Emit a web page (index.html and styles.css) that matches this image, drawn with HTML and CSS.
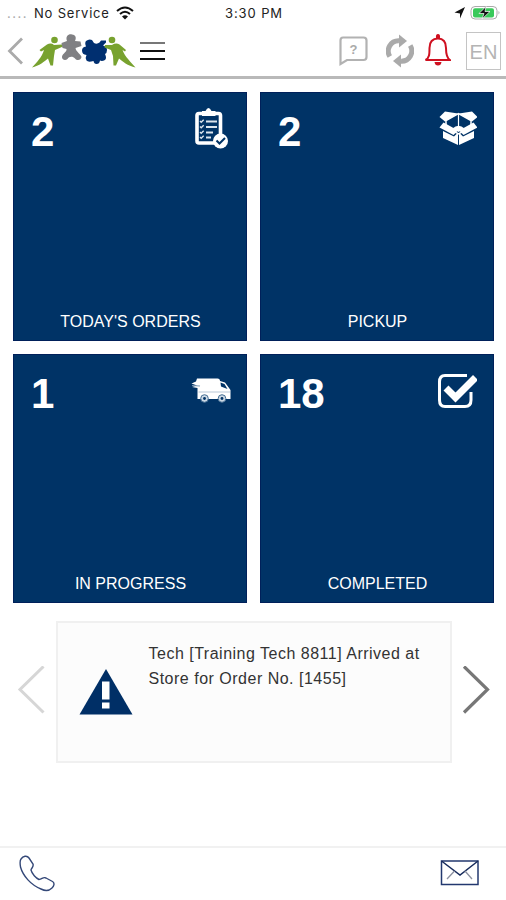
FILE: index.html
```
<!DOCTYPE html>
<html lang="en">
<head>
<meta charset="UTF-8">
<meta name="viewport" content="width=device-width, initial-scale=1">
<title>Orders</title>
<link rel="stylesheet" href="styles.css">
</head>
<body>

<div class="statusbar">
  <div class="carrier">
    <span class="dots">....</span>
    <span class="service">No Service</span>
    <svg class="wifi" width="18" height="14" viewBox="116 5 18 14">
      <path d="M117 10Q125 3 133 10M120 13Q125 8.500 130 13" fill="none" stroke="#111" stroke-width="2"/>
      <path d="M122 15.500Q125 13 128 15.500L125 18.500z" fill="#111"/>
    </svg>
  </div>
  <div class="time">3:30 PM</div>
  <div class="power">
    <svg width="48" height="16" viewBox="454 5 48 16">
      <path d="M465 7L460 18.500V13.500L454.500 12.500z" fill="#111"/>
      <rect x="471" y="6.500" width="26" height="12.500" rx="4" fill="#fff" stroke="#aaa"/>
      <rect x="473" y="8.200" width="21" height="9.200" rx="2" fill="#39c95a"/>
      <path d="M498.500 11q2 1.500 0 3.500z" fill="#aaa"/>
      <path d="M486 6.500L479 13.500H484L482 19L490 11.500H485z" fill="#111" stroke="#fff" stroke-width=".7"/>
    </svg>
  </div>
</div>

<div class="header">
  <svg class="back" width="17" height="30" viewBox="7 36 17 30">
    <path d="M22 38.500L9.500 51L22 63.500" fill="none" stroke="#aaa" stroke-width="2.800"/>
  </svg>
  <svg class="logo" width="104" height="36" viewBox="32 33 104 36">
    <g fill="#78a22f">
      <circle cx="54.500" cy="40" r="3.300"/>
      <path d="M62 44.500L63 46.500L55 50L54 56L53 65.500H50.500L48 58.500C45 61 39 66 32 67.500C37 62 42 57 44 50L41 51.500L39.500 50L47 44.500Q51 42.500 54 45z"/>
    </g>
    <path d="M67 41C65 36 69 33.500 72 34.500C76 35 76.500 38 75 41L80.500 41.500L81.500 46L75.500 48C76 52 81 54 81.500 57C81 60.500 77 61 75 58.500C73 56 69 56 67.500 59C65.500 61 61.500 60 62 56.500C63 53 67 52 66.500 49L62.500 48L61.500 43z" fill="#808083"/>
    <path d="M86 41Q89 38.500 92 40L94 43Q97 44.500 99.500 42.500L101 40.500H106V42.500L103 45.500Q107 46.500 107 50Q107 53 105 54Q107 58 105 60Q102 61.500 100 60.500Q99.500 64 96.500 64Q94 64 93.500 61Q88 62.500 86.500 60.500Q85 57.500 86.500 55Q82 54.500 82 50.500Q82 47 86 46.500Q84.500 43 86 41z" fill="#002f70"/>
    <g fill="#78a22f">
      <circle cx="112" cy="40" r="3.300"/>
      <path d="M105 45L104.500 47.500L111 50L113 56L113.500 65.500H116L119 58.500C122 61 128 66 135.500 67.500C131 62 125 57 122.500 50L125 51.500L126 50L119.500 44.500Q116 42.500 112 45z"/>
    </g>
  </svg>
  <div class="menu">
    <span class="bar faded"></span>
    <span class="bar"></span>
    <span class="bar"></span>
  </div>
  <div class="actions">
    <svg width="31" height="32" viewBox="338 36 31 32">
      <path d="M343 38.500H363.500Q366.500 38.500 366.500 41.500V58Q366.500 61 363.500 61H347L340.500 65V41.500Q340.500 38.500 343 38.500z" fill="none" stroke="#b2b2b2" stroke-width="2.200"/>
      <text x="353.500" y="54.500" class="question">?</text>
    </svg>
    <svg class="sync" width="28" height="34" viewBox="386 35 28 34">
      <path d="M389.800 57.500A10.300 10.300 0 0 1 399 41.800" fill="none" stroke="#aaa" stroke-width="5"/>
      <path d="M399 35.500L407 42L399 48.500z" fill="#aaa"/>
      <g transform="rotate(180 400 52)">
        <path d="M389.800 57.500A10.300 10.300 0 0 1 399 41.800" fill="none" stroke="#aaa" stroke-width="5"/>
        <path d="M399 35.500L407 42L399 48.500z" fill="#aaa"/>
      </g>
    </svg>
    <svg class="bell" width="27" height="33" viewBox="424 36 27 33">
      <path d="M425.500 62C429.500 60 429.500 56 429.500 50C429.500 43 433 40.500 438 40.500C443 40.500 446 43 446 50C446 56 446.500 60 450 62z" fill="none" stroke="#cf1020" stroke-width="2"/>
      <path d="M436 40Q435.500 36 438 36Q440.500 36 440 40zM434.500 64H441.500Q441 67.500 438 67.500Q435 67.500 434.500 64z" fill="#cf1020"/>
    </svg>
    <div class="lang">EN</div>
  </div>
</div>

<div class="tiles">
  <div class="tile">
    <div class="tile-top">
      <span class="count">2</span>
      <svg width="36" height="42" viewBox="194 107 36 42">
        <rect x="197" y="113.500" width="23.500" height="29.500" rx="2" fill="none" stroke="#fff" stroke-width="3.600"/>
        <path d="M202 111H205.500Q208.500 105 211.500 111H215.500V116H202z" fill="#fff"/>
        <path d="M206 121.500H217M206 127H217M206 132.500H213M206 137.500H211" stroke="#dce5ee" stroke-width="2.200"/>
        <path d="M200 121l1.200 1.200 2.500-2.500M200 126.500l1.200 1.200 2.500-2.500M200 132l1.200 1.200 2.500-2.500M200 137l1.200 1.200 2.500-2.500" fill="none" stroke="#dce5ee" stroke-width="1.400"/>
        <circle cx="220.500" cy="141" r="7.500" fill="#fff"/>
        <path d="M216.500 140.500L219.500 143.500L225 138" fill="none" stroke="#003366" stroke-width="2"/>
      </svg>
    </div>
    <div class="label">TODAY'S ORDERS</div>
  </div>
  <div class="tile">
    <div class="tile-top">
      <span class="count">2</span>
      <svg width="40" height="42" viewBox="437 107 40 42">
        <path d="M446 120.500L458.500 113.500L471 120.500V127L458.500 134L446 127z" fill="#003366" stroke="#fff" stroke-width="1.500"/>
        <path d="M458.500 114V127" stroke="#fff" stroke-width="1.200"/>
        <path d="M452.500 128.500Q458.500 123 464.500 128.500L458.500 132z" fill="#fff"/>
        <path d="M439.500 117L445 111.500L458 113.500L445 121.500z" fill="#fff"/>
        <path d="M477.500 117L472 111.500L459 113.500L472 121.500z" fill="#fff"/>
        <path d="M443.500 122.500L458 130.500L453.500 135L439.500 127.500z" fill="#fff"/>
        <path d="M473.500 122.500L459 130.500L463.500 135L477.500 127.500z" fill="#fff"/>
        <path d="M443 131L454 136.500L458 132.500V145L443 138zM474 131L463 136.500L459 132.500V145L474 138z" fill="#fff"/>
      </svg>
    </div>
    <div class="label">PICKUP</div>
  </div>
  <div class="tile">
    <div class="tile-top">
      <span class="count">1</span>
      <svg class="van" width="42" height="42" viewBox="192 369 42 42">
        <path d="M198 378.500H218.500Q221 378.500 221 381L226 382.500L231.500 390V399H198.500V388L193 387L198 385.500L192.500 383.500L197 381.500z" fill="#fff"/>
        <path d="M221.500 382.500L225.500 384L228.500 389L222 386.500z" fill="#003366"/>
        <path d="M199.500 392H231" stroke="#b9c8d7" stroke-width="1"/>
        <path d="M193 385.500L201 386" stroke="#7f9cb7" stroke-width="1.200"/>
        <circle cx="205.500" cy="398.500" r="3.800" fill="#cbd8e4" stroke="#466f94"/>
        <circle cx="205.500" cy="398.500" r="1.400" fill="#003366"/>
        <circle cx="223" cy="398.500" r="3.800" fill="#cbd8e4" stroke="#466f94"/>
        <circle cx="223" cy="398.500" r="1.400" fill="#003366"/>
      </svg>
    </div>
    <div class="label">IN PROGRESS</div>
  </div>
  <div class="tile">
    <div class="tile-top">
      <span class="count">18</span>
      <svg width="42" height="42" viewBox="435 369 42 42">
        <path d="M467 375.500H445Q439.500 375.500 439.500 382V400Q439.500 406.500 445 406.500H465Q471 406.500 471 400V392" fill="none" stroke="#fff" stroke-width="3"/>
        <path d="M446 388L455.500 397.500L475.500 377.500" fill="none" stroke="#fff" stroke-width="7"/>
      </svg>
    </div>
    <div class="label">COMPLETED</div>
  </div>
</div>

<div class="notices">
  <svg class="prev" width="28" height="52" viewBox="17 666 28 52">
    <path d="M43.500 666.500L20 689.500L43.500 712.500" fill="none" stroke="#d6d6d6" stroke-width="3"/>
  </svg>
  <div class="notice">
    <svg width="54" height="47" viewBox="79 668 54 47">
      <path d="M106 669L132.500 714.500H79.500z" fill="#002f66"/>
      <path d="M102 681.500H109.500V699.500H102zM102 702.500H109.500V708.500H102z" fill="#fff"/>
    </svg>
    <p>Tech [Training Tech 8811] Arrived at<br>Store for Order No. [1455]</p>
  </div>
  <svg class="next" width="28" height="52" viewBox="462 666 28 52">
    <path d="M464 666.500L487.500 689.500L464 712.500" fill="none" stroke="#777" stroke-width="3.200"/>
  </svg>
</div>

<div class="footer">
  <svg class="phone" width="38" height="38" viewBox="18 854 38 38">
    <path d="M21 858C23 855 27 854 29 857L33 863C34 866 31 867.500 31 869C32 873 36 877 39 878.500C42 878.500 43 875.500 46 877L52.500 880.500C55 882 54 885 52 887C49 890 45 890 41 888C31 884 23 875 20.500 866C20 863 19.500 860 21 858z" fill="none" stroke="#344878" stroke-width="1.400"/>
  </svg>
  <svg class="mail" width="40" height="28" viewBox="440 860 40 28">
    <rect x="441.500" y="861" width="36.500" height="23.500" fill="#fff" stroke="#23386f" stroke-width="1.500"/>
    <path d="M441.500 861L460 875L478 861" fill="none" stroke="#172b5c" stroke-width="1.500"/>
    <path d="M447 879L454.500 871M472 879L465 871" stroke="#8b90a0" stroke-width="1.300"/>
  </svg>
</div>

</body>
</html>
```
FILE: styles.css
```
* {
  box-sizing: border-box;
}

body {
  margin: 0;
  height: 900px;
  display: flex;
  flex-direction: column;
  background-color: #fff;
  font-family: "Liberation Sans", Arial, sans-serif;
  overflow: hidden;
}

svg {
  display: block;
  flex: none;
}

/* status bar */
.statusbar {
  display: grid;
  grid-template-columns: 1fr auto 1fr;
  height: 25px;
  padding: 0 4px 0 7px;
  align-items: center;
  font-family: Inter, sans-serif;
  font-size: 13px;
  color: #222;
}

.carrier {
  display: flex;
  align-items: center;
}

.dots {
  width: 27px;
  color: #aaa;
  letter-spacing: 1.5px;
}

.service {
  width: 77px;
  letter-spacing: 0.8px;
  white-space: nowrap;
}

.wifi {
  margin-left: 5px;
}

.time {
  margin-right: 1px;
  letter-spacing: 0.9px;
}

.power {
  justify-self: end;
}

/* header */
.header {
  display: flex;
  align-items: center;
  height: 54px;
  padding: 0 5px 0 7px;
  border-bottom: 3px solid #b9b9b9;
}

.logo {
  margin-left: 8px;
}

.menu {
  display: flex;
  flex-direction: column;
  gap: 6px;
  width: 25px;
  margin-left: 4px;
}

.bar {
  height: 2px;
  background-color: #111;
}

.faded {
  background-color: #777;
}

.actions {
  display: flex;
  align-items: center;
  margin-left: auto;
}

.question {
  font: bold 13px "Liberation Sans", Arial, sans-serif;
  fill: #aaa;
  text-anchor: middle;
}

.sync {
  margin-left: 17px;
}

.bell {
  margin-left: 10px;
}

.lang {
  width: 35px;
  height: 38px;
  margin-left: 15px;
  border: 1px solid #c4c4c4;
  color: #b4b4b4;
  font-size: 20px;
  line-height: 39px;
  text-align: center;
}

/* tiles */
.tiles {
  display: grid;
  grid-template-columns: 234px 234px;
  grid-auto-rows: 249px;
  gap: 13px;
  padding: 13px 13px 0;
}

.tile {
  display: flex;
  flex-direction: column;
  justify-content: space-between;
  padding: 14px 16px 8px 17px;
  background-color: #003366;
  border: 1px solid #00205a;
  color: #fff;
}

.tile-top {
  display: flex;
  justify-content: space-between;
}

.van {
  margin-right: -3px;
}

.count {
  font-size: 42px;
  font-weight: bold;
  line-height: 50px;
}

.label {
  font-size: 16px;
  line-height: 20px;
  text-align: center;
}

/* notices */
.notices {
  display: flex;
  justify-content: space-between;
  align-items: center;
  height: 142px;
  margin-top: 18px;
  padding: 0 16px 0 17px;
}

.notice {
  display: flex;
  width: 396px;
  height: 142px;
  padding: 18px 20px 0 21px;
  background-color: #fcfcfc;
  border: 2px solid #f0f0f0;
}

.notice svg {
  margin-top: 27px;
}

.notice p {
  margin: 0 0 0 16px;
  font-size: 16px;
  line-height: 25px;
  letter-spacing: 0.5px;
  color: #333;
  white-space: nowrap;
}

/* footer */
.footer {
  display: flex;
  justify-content: space-between;
  align-items: center;
  height: 54px;
  margin-top: auto;
  padding: 0 26px 0 18px;
  border-top: 2px solid #f1f1f1;
}
```
